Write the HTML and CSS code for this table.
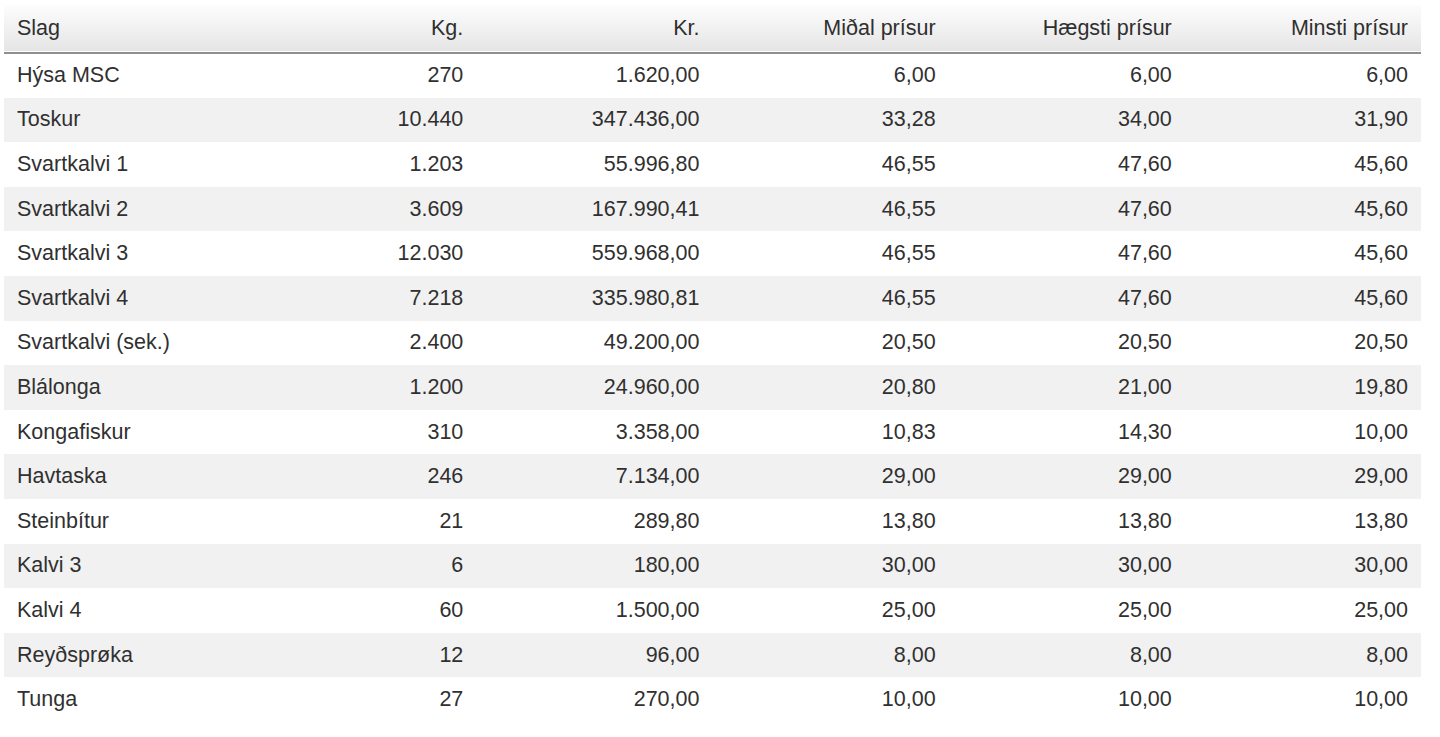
FILE: index.html
```html
<!DOCTYPE html>
<html lang="fo">
<head>
<meta charset="utf-8">
<title>Prísir</title>
<link rel="stylesheet" href="styles.css">
</head>
<body>
<table class="prices">
  <thead>
    <tr>
      <th class="name">Slag</th>
      <th>Kg.</th>
      <th>Kr.</th>
      <th>Miðal prísur</th>
      <th>Hægsti prísur</th>
      <th>Minsti prísur</th>
    </tr>
  </thead>
  <tbody>
    <tr><td class="name">Hýsa MSC</td><td>270</td><td>1.620,00</td><td>6,00</td><td>6,00</td><td>6,00</td></tr>
    <tr><td class="name">Toskur</td><td>10.440</td><td>347.436,00</td><td>33,28</td><td>34,00</td><td>31,90</td></tr>
    <tr><td class="name">Svartkalvi 1</td><td>1.203</td><td>55.996,80</td><td>46,55</td><td>47,60</td><td>45,60</td></tr>
    <tr><td class="name">Svartkalvi 2</td><td>3.609</td><td>167.990,41</td><td>46,55</td><td>47,60</td><td>45,60</td></tr>
    <tr><td class="name">Svartkalvi 3</td><td>12.030</td><td>559.968,00</td><td>46,55</td><td>47,60</td><td>45,60</td></tr>
    <tr><td class="name">Svartkalvi 4</td><td>7.218</td><td>335.980,81</td><td>46,55</td><td>47,60</td><td>45,60</td></tr>
    <tr><td class="name">Svartkalvi (sek.)</td><td>2.400</td><td>49.200,00</td><td>20,50</td><td>20,50</td><td>20,50</td></tr>
    <tr><td class="name">Blálonga</td><td>1.200</td><td>24.960,00</td><td>20,80</td><td>21,00</td><td>19,80</td></tr>
    <tr><td class="name">Kongafiskur</td><td>310</td><td>3.358,00</td><td>10,83</td><td>14,30</td><td>10,00</td></tr>
    <tr><td class="name">Havtaska</td><td>246</td><td>7.134,00</td><td>29,00</td><td>29,00</td><td>29,00</td></tr>
    <tr><td class="name">Steinbítur</td><td>21</td><td>289,80</td><td>13,80</td><td>13,80</td><td>13,80</td></tr>
    <tr><td class="name">Kalvi 3</td><td>6</td><td>180,00</td><td>30,00</td><td>30,00</td><td>30,00</td></tr>
    <tr><td class="name">Kalvi 4</td><td>60</td><td>1.500,00</td><td>25,00</td><td>25,00</td><td>25,00</td></tr>
    <tr><td class="name">Reyðsprøka</td><td>12</td><td>96,00</td><td>8,00</td><td>8,00</td><td>8,00</td></tr>
    <tr><td class="name">Tunga</td><td>27</td><td>270,00</td><td>10,00</td><td>10,00</td><td>10,00</td></tr>
  </tbody>
</table>
</body>
</html>
```
FILE: styles.css
```css
html, body {
  margin: 0;
  padding: 0;
  background: #ffffff;
}

body {
  padding: 5px 19px 0 4px;
  font-family: "Liberation Sans", Arial, Helvetica, sans-serif;
  color: #303030;
}

.prices {
  width: 1417px;
  border-collapse: collapse;
  border-spacing: 0;
  table-layout: fixed;
  font-size: 21.5px;
}

.prices th,
.prices td {
  padding: 0 13px;
  text-align: right;
  font-weight: normal;
  white-space: nowrap;
  vertical-align: middle;
}

.prices .name {
  text-align: left;
}

.prices thead tr {
  height: 48px;
  background: linear-gradient(to bottom, #fdfdfd 0%, #f1f1f1 50%, #e5e5e5 100%);
  border-bottom: 2px solid #8f8f8f;
}

.prices thead th {
  color: #2f2f2f;
  padding-bottom: 1px;
}

.prices tbody tr {
  height: 44.6px;
}

.prices tbody tr:nth-child(even) {
  background: #f1f1f1;
}
```
